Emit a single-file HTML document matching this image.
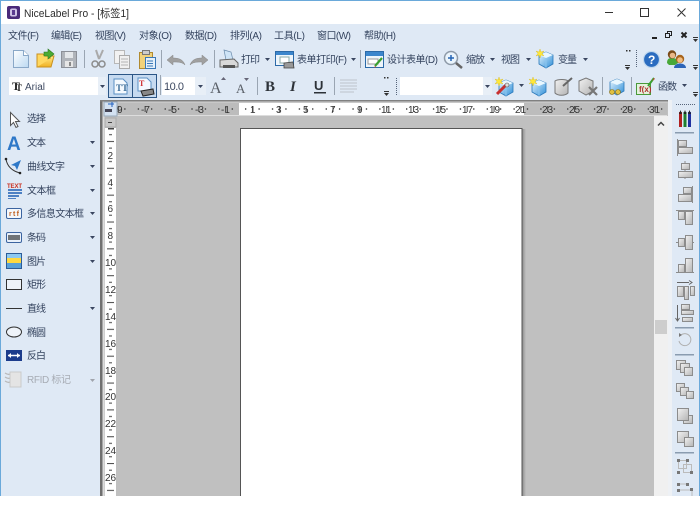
<!DOCTYPE html>
<html><head><meta charset="utf-8"><title>NiceLabel Pro</title>
<style>
html,body{margin:0;padding:0;background:#fff;width:700px;height:515px;overflow:hidden}
svg{display:block;filter:blur(.3px)}
text{font-family:"Liberation Sans","Noto Sans CJK SC",sans-serif;font-size:10px;fill:#34435e}
.m{font-size:10px}
.d{fill:#a7acb4}
.r{font-size:10px;fill:#333}
</style></head><body>
<svg width="700" height="515" viewBox="0 0 700 515" xmlns="http://www.w3.org/2000/svg">
<defs>
<linearGradient id="g" x1="0" y1="0" x2="1" y2="1"><stop offset="0" stop-color="#f2f2f2"/><stop offset="1" stop-color="#b4b4b4"/></linearGradient>
<linearGradient id="c" x1="0" y1="0" x2="1" y2="1"><stop offset="0" stop-color="#e8f6ff"/><stop offset="1" stop-color="#2f8fd8"/></linearGradient>
<linearGradient id="p" x1="0" y1="0" x2="1" y2="1"><stop offset="0" stop-color="#fff"/><stop offset="1" stop-color="#bcd9f2"/></linearGradient>
<linearGradient id="y" x1="0" y1="0" x2="0" y2="1"><stop offset="0" stop-color="#ffe88a"/><stop offset="1" stop-color="#f0b020"/></linearGradient>
<linearGradient id="s" x1="0" y1="0" x2="1" y2="0"><stop offset="0" stop-color="#8a8a8a"/><stop offset="1" stop-color="#c0c0c0"/></linearGradient>
<pattern id="hr" x="239" y="103" width="26.84" height="12" patternUnits="userSpaceOnUse">
<rect x="6.2" y="5" width="1" height="2" fill="#444"/><rect x="13" y="3" width="1" height="6" fill="#444"/><rect x="19.6" y="5" width="1" height="2" fill="#444"/>
</pattern>
<pattern id="vr" x="106" y="128" width="10" height="26.84" patternUnits="userSpaceOnUse">
<rect x="3" y="6.2" width="3" height="1" fill="#444"/><rect x="1" y="13" width="7" height="1" fill="#444"/><rect x="3" y="19.6" width="3" height="1" fill="#444"/>
</pattern>
<pattern id="dots" width="2" height="2" patternUnits="userSpaceOnUse"><rect width="1" height="1" fill="#56647a"/></pattern>
<path id="a" d="M0 0h5l-2.500 3z" fill="#3a4660"/>
<g id="gr"><rect x="0" y="0" width="5" height="1" fill="#333"/><path d="M0 2h5l-2.500 3z" fill="#333"/></g>
<g id="cube"><path d="M2 5l7-3 7 3v9l-7 4-7-4z" fill="url(#c)" stroke="#2a78ba" stroke-width=".8"/><path d="M2 5l7 3 7-3-7-3z" fill="#e9f7ff"/><path d="M9 8v10" stroke="#8cc6ee" fill="none"/></g>
<path id="star" d="M4 0l1 3 3 -1-2 2.500 2 2.500-3-1-1 3-1-3-3 1 2-2.500-2-2.500 3 1z" fill="#ffe83a" stroke="#d6b820" stroke-width=".4"/>
</defs>

<!-- window -->
<rect width="700" height="515" fill="#fff"/>
<rect x="0" y="24" width="700" height="472" fill="#dfe9f5"/>
<rect x="0" y="0" width="700" height="1" fill="#6aa9da"/>
<rect x="0" y="0" width="1" height="496" fill="#6aa9da"/>
<rect x="699" y="0" width="1" height="496" fill="#6aa9da"/>

<!-- title bar -->
<rect x="7" y="6" width="13" height="13" rx="2" fill="#4a2a7a"/>
<rect x="10" y="8.500" width="7" height="8" rx="2" fill="#cfc2e6"/>
<rect x="12" y="10" width="3" height="5" fill="#5b3a90"/>
<text x="24" y="17" style="font-size:11px;fill:#2d2d2d" textLength="105" lengthAdjust="spacingAndGlyphs">NiceLabel Pro - [标签1]</text>
<path d="M605 12.500h8" stroke="#333" fill="none"/>
<rect x="640.500" y="8.500" width="8" height="8" fill="none" stroke="#333"/>
<path d="M677.500 8.500l8 8M685.500 8.500l-8 8" stroke="#333" fill="none"/>

<!-- menu -->
<text class="m" x="8" y="39" textLength="31">文件(F)</text>
<text class="m" x="51" y="39" textLength="31">编辑(E)</text>
<text class="m" x="95" y="39" textLength="31">视图(V)</text>
<text class="m" x="139" y="39" textLength="33">对象(O)</text>
<text class="m" x="185" y="39" textLength="32">数据(D)</text>
<text class="m" x="230" y="39" textLength="32">排列(A)</text>
<text class="m" x="274" y="39" textLength="31">工具(L)</text>
<text class="m" x="317" y="39" textLength="34">窗口(W)</text>
<text class="m" x="364" y="39" textLength="32">帮助(H)</text>
<rect x="652" y="37" width="5" height="2" fill="#222"/>
<path d="M665.500 33.500h4v4h-4zM667.500 33v-1.500h4v4h-2" fill="none" stroke="#222"/>
<path d="M681.500 32.500l5 5M686.500 32.500l-5 5" stroke="#222" stroke-width="2" fill="none"/>
<use href="#gr" x="693" y="37"/>

<!-- toolbar 1 -->
<rect x="5" y="50" width="1" height="17" fill="url(#dots)"/>
<path d="M13.500 50.500h10l5 5v12h-15z" fill="url(#p)" stroke="#8aa8c8"/>
<path d="M23.500 50.500v5h5" fill="#fff" stroke="#8aa8c8"/>
<path d="M37 67l3-11h14l-3 11z" fill="url(#y)" stroke="#c89020"/>
<path d="M37 67v-13h6l2 2h5v3" fill="#ffd860" stroke="#c89020"/>
<path d="M44 52h4v-3l6 5-6 5v-3h-4z" fill="#4cab34" stroke="#2c7a20" stroke-width=".6"/>
<path d="M61.500 51.500h15v16h-15z" fill="#b0b4ba" stroke="#8c9098"/>
<rect x="65" y="52" width="8" height="6" fill="#e4e7ea"/><rect x="65" y="61" width="8" height="6" fill="#e6e6e6"/><rect x="69" y="62" width="2" height="4" fill="#888"/>
<rect x="84" y="50" width="1" height="18" fill="#9aa5b2"/>
<path d="M96 50l3 9M103 50l-4 9" stroke="#aaa" stroke-width="2" fill="none"/>
<circle cx="95" cy="64" r="3" fill="none" stroke="#8c8c8c" stroke-width="1.500"/><circle cx="102" cy="64" r="3" fill="none" stroke="#8c8c8c" stroke-width="1.500"/>
<rect x="114.500" y="50.500" width="10" height="13" fill="#f2f2f2" stroke="#b8b8b8"/>
<rect x="119.500" y="55.500" width="10" height="13" fill="#f0f0f0" stroke="#aaa"/>
<path d="M121 59h7M121 62h7M121 65h7" stroke="#b4b4b4" fill="none"/>
<rect x="139.500" y="52.500" width="13" height="16" fill="#f2d27a" stroke="#b08a30"/>
<rect x="142.500" y="50.500" width="7" height="4" fill="#ccc" stroke="#777"/>
<rect x="145.500" y="57.500" width="10" height="11" fill="#e4f0fa" stroke="#3a78b8"/>
<path d="M147 61h6M147 63.500h6M147 66h6" stroke="#3a78b8" fill="none"/>
<rect x="161" y="50" width="1" height="18" fill="#9aa5b2"/>
<path d="M167 60l6-5v3c5 0 10 1 12 7-3-3-7-3-12-3v3z" fill="#a0a0a0" stroke="#888" stroke-width=".5"/>
<path d="M208 60l-6-5v3c-5 0-10 1-12 7 3-3 7-3 12-3v3z" fill="#a0a0a0" stroke="#888" stroke-width=".5"/>
<rect x="214" y="50" width="1" height="18" fill="#9aa5b2"/>
<path d="M224 50l7 2 2 8h-7z" fill="#cfe4f6" stroke="#6c8cac" stroke-width=".7"/>
<path d="M220 60l14-1 4 4v4h-18z" fill="#d8d8d8" stroke="#666"/>
<rect x="223" y="65" width="12" height="3" fill="#555"/>
<text x="241" y="63" textLength="19">打印</text><use href="#a" x="265" y="58"/>
<rect x="275.500" y="51.500" width="18" height="14" fill="#eef5fb" stroke="#2c6aa8"/><rect x="276" y="52" width="17" height="3" fill="#3c86cc"/>
<rect x="280" y="57" width="9" height="6" fill="#fff" stroke="#8aa"/>
<path d="M284 63l9-1 1 6h-10z" fill="#999" stroke="#444" stroke-width=".8"/>
<text x="297" y="63" textLength="50">表单打印(F)</text><use href="#a" x="351" y="58"/>
<rect x="360" y="50" width="1" height="18" fill="#9aa5b2"/>
<rect x="365.500" y="51.500" width="18" height="16" fill="#eef5fb" stroke="#2c6aa8"/><rect x="366" y="52" width="17" height="4" fill="#3c86cc"/>
<rect x="368" y="59" width="10" height="5" fill="#fff" stroke="#999"/>
<path d="M375 66l7-8" stroke="#3aa030" stroke-width="2.200" fill="none"/><path d="M375 66l-1 2 2-1z" fill="#d04030"/>
<text x="387" y="63" textLength="51">设计表单(D)</text>
<circle cx="451" cy="58" r="6.500" fill="#eaf4fc" stroke="#8e9aa8" stroke-width="1.500"/>
<path d="M448 58h6M451 55v6" stroke="#2464b4" stroke-width="1.500" fill="none"/>
<path d="M456 63l6 5" stroke="#666" stroke-width="2.500" fill="none"/>
<text x="466" y="63" textLength="19">缩放</text><use href="#a" x="490" y="58"/>
<text x="501" y="63" textLength="19">视图</text><use href="#a" x="526" y="58"/>
<use href="#cube" x="537" y="50"/><use href="#star" x="536" y="49"/>
<text x="558" y="63" textLength="19">变量</text><use href="#a" x="583" y="58"/>
<rect x="626" y="50" width="1.500" height="1.500" fill="#333"/><rect x="629" y="50" width="1.500" height="1.500" fill="#333"/>
<use href="#gr" x="625" y="65"/>
<rect x="636" y="50" width="1" height="17" fill="url(#dots)"/>
<circle cx="651.500" cy="59.500" r="8" fill="#2a6cc0" stroke="#c0d8ee" stroke-width="1.200"/>
<text x="648" y="64" style="font-size:12px;font-weight:bold;fill:#fff">?</text>
<path d="M667 63c0-5 3-5 5-5s5 0 6 5l-3 2h-6z" fill="#48a838"/>
<circle cx="672" cy="54.500" r="4.200" fill="#7a4a18"/><circle cx="672.500" cy="55.500" r="2.800" fill="#eab888"/>
<path d="M674 68c0-6 12-6 12 0z" fill="#2c64b8"/>
<circle cx="680" cy="59" r="4.200" fill="#a8641c"/><circle cx="680" cy="60" r="2.800" fill="#f0bc80"/>
<use href="#gr" x="693" y="65"/>

<!-- toolbar 2 -->
<rect x="5" y="78" width="1" height="18" fill="url(#dots)"/>
<rect x="9" y="77" width="89" height="18" fill="#fff"/><rect x="98" y="77" width="8" height="18" fill="#e8eff7"/>
<text x="12" y="90" style="font-family:'Liberation Serif',serif;font-size:12px;font-weight:bold;fill:#222">T</text>
<text x="16" y="91" style="font-family:'Liberation Serif',serif;font-size:9px;font-weight:bold;fill:#222">T</text>
<text x="25" y="90" style="fill:#3c4860" textLength="20">Arial</text>
<use href="#a" x="100" y="85"/>
<rect x="108.500" y="74.500" width="24" height="23" fill="#c6daf0" stroke="#2c5686"/>
<rect x="132.500" y="74.500" width="24" height="23" fill="#c6daf0" stroke="#2c5686"/>
<path d="M114 79h9l4 4v11h-13z" fill="#f4f9fe" stroke="#5a90c4"/>
<text x="116" y="91" style="font-family:'Liberation Serif',serif;font-size:9px;font-weight:bold;fill:#3a6c98">TT</text>
<path d="M138 78h9l4 4v9h-13z" fill="#f4f9fe" stroke="#5a90c4"/>
<text x="139" y="86" style="font-family:'Liberation Serif',serif;font-size:8px;font-weight:bold;fill:#d03030">T</text>
<path d="M141 91l12-2 1 5-11 2z" fill="#888" stroke="#222"/>
<rect x="160" y="75" width="1" height="20" fill="#9aa5b2"/>
<rect x="162" y="77" width="33" height="18" fill="#fff"/><rect x="195" y="77" width="11" height="18" fill="#e8eff7"/>
<text x="164" y="90" style="font-size:11px;fill:#3c4860" textLength="20">10.0</text>
<use href="#a" x="198" y="85"/>
<text x="210" y="93" style="font-family:'Liberation Serif',serif;font-size:16px;fill:#5a6068">A</text>
<path d="M221 80l2.500-3 2.500 3z" fill="#667"/>
<text x="236" y="93" style="font-family:'Liberation Serif',serif;font-size:13px;fill:#5a6068">A</text>
<path d="M244 78h5l-2.500 3z" fill="#667"/>
<rect x="257" y="77" width="1" height="18" fill="#9aa5b2"/>
<text x="265" y="91" style="font-family:'Liberation Serif',serif;font-size:15px;font-weight:bold;fill:#2d3238">B</text>
<text x="290" y="91" style="font-family:'Liberation Serif',serif;font-size:15px;font-weight:bold;font-style:italic;fill:#2d3238">I</text>
<text x="314" y="90" style="font-family:'Liberation Sans',sans-serif;font-size:13px;font-weight:bold;fill:#2d3238">U</text>
<rect x="314" y="92" width="12" height="1.500" fill="#2d3238"/>
<rect x="334" y="77" width="1" height="18" fill="#9aa5b2"/>
<path d="M340 80h17M340 83h17M340 86h17M340 89h17M340 92h14" stroke="#bcc2ca" fill="none"/>
<rect x="384" y="77" width="1.500" height="1.500" fill="#333"/><rect x="387" y="77" width="1.500" height="1.500" fill="#333"/>
<use href="#gr" x="384" y="91"/>
<rect x="396" y="77" width="1" height="18" fill="url(#dots)"/>
<rect x="400" y="77" width="83" height="18" fill="#fff"/><rect x="483" y="77" width="9" height="18" fill="#e8eff7"/>
<use href="#a" x="485" y="85"/>
<use href="#cube" x="497" y="78"/><use href="#star" x="495" y="77"/>
<path d="M497 94l9-9" stroke="#c83030" stroke-width="3" fill="none"/><circle cx="507" cy="85" r="2" fill="#ddd" stroke="#555" stroke-width=".6"/>
<use href="#a" x="519" y="84"/>
<use href="#cube" x="530" y="78"/><use href="#star" x="529" y="77"/>
<path d="M555 81c3-2 11-2 13 0v12c-3 3-10 3-13 0z" fill="url(#g)" stroke="#777"/>
<path d="M563 86l9-8" stroke="#666" stroke-width="2" fill="none"/>
<path d="M579 81l7-3 7 3v10l-7 4-7-4z" fill="url(#g)" stroke="#777"/>
<path d="M589 87l8 8M597 87l-8 8" stroke="#777" stroke-width="2.200" fill="none"/>
<rect x="602" y="77" width="1" height="18" fill="#9aa5b2"/>
<use href="#cube" x="608" y="77"/>
<circle cx="612" cy="92" r="2.500" fill="#e0c040" stroke="#806a10" stroke-width=".6"/><circle cx="618" cy="92" r="2.500" fill="#e0c040" stroke="#806a10" stroke-width=".6"/>
<rect x="631" y="77" width="1" height="18" fill="#9aa5b2"/>
<rect x="636.500" y="83.500" width="14" height="11" fill="#e4f2dc" stroke="#4a9a3a"/>
<text x="639" y="92" style="font-size:8px;font-weight:bold;fill:#b03030">f(x)</text>
<path d="M648 86l6-8" stroke="#3aa030" stroke-width="2" fill="none"/><path d="M652 81l2-3 1 1z" fill="#d04030"/>
<text x="658" y="90" textLength="19">函数</text><use href="#a" x="682" y="84"/>
<use href="#gr" x="693" y="92"/>

<!-- left toolbar -->
<rect x="5" y="103" width="89" height="1" fill="url(#dots)"/>
<path d="M10.500 112.500v13l3-3 2.500 5 2-1-2.500-5h4z" fill="#fff" stroke="#555"/>
<text x="27" y="122" textLength="19">选择</text>
<text x="7" y="150" style="font-size:19px;font-weight:bold;fill:#2e78c8">A</text>
<text x="27" y="146" textLength="19">文本</text><use href="#a" x="90" y="141"/>
<path d="M6 159c1 7 6 12 14 14" fill="none" stroke="#333"/><circle cx="6" cy="159" r="1.300" fill="#222"/><circle cx="20" cy="173" r="1.300" fill="#222"/>
<path d="M11 165l10-5-4 10-2-4z" fill="#2e78c8"/>
<text x="27" y="170" textLength="38">曲线文字</text><use href="#a" x="90" y="165"/>
<text x="7" y="188" style="font-size:6px;font-weight:bold;fill:#c83020" textLength="15">TEXT</text>
<path d="M8 189h14v2h-14zM8 192h14v2h-14zM8 195h11v2h-11zM8 198h8v1h-8z" fill="#4c80c4"/>
<text x="27" y="194" textLength="29">文本框</text><use href="#a" x="90" y="189"/>
<rect x="6.500" y="208.500" width="15" height="10" rx="1.500" fill="#f4f8fc" stroke="#3c64a0"/>
<text x="9" y="216" style="font-size:7px;font-weight:bold;fill:#c06020" textLength="10">rtf</text>
<text x="27" y="217" textLength="57">多信息文本框</text><use href="#a" x="90" y="212"/>
<rect x="6.500" y="232.500" width="15" height="10" rx="1.500" fill="#e8f0fa" stroke="#3c64a0"/>
<path d="M9 235v5M11 235v5M13 235v5M15 235v5M17 235v5M19 235v5" stroke="#222" stroke-width="1.200"/>
<text x="27" y="241" textLength="19">条码</text><use href="#a" x="90" y="236"/>
<rect x="6.500" y="253.500" width="15" height="15" fill="#8cc8f0" stroke="#2c5c98"/>
<rect x="7" y="258" width="14" height="5" fill="#ffd840"/><rect x="7" y="263" width="14" height="5" fill="#58a0d8"/>
<text x="27" y="265" textLength="19">图片</text><use href="#a" x="90" y="260"/>
<rect x="6.500" y="279.500" width="15" height="10" fill="#eef3f9" stroke="#333"/>
<text x="27" y="288" textLength="19">矩形</text>
<rect x="6" y="308" width="16" height="1" fill="#333"/>
<text x="27" y="312" textLength="19">直线</text><use href="#a" x="90" y="307"/>
<ellipse cx="14" cy="332" rx="7.500" ry="5" fill="#eef3f9" stroke="#333"/>
<text x="27" y="336" textLength="19">椭圆</text>
<rect x="6" y="350" width="16" height="11" fill="#1c3c8c"/>
<path d="M8 355.500h12" stroke="#fff" stroke-width="1.500"/><path d="M8 355.500l3-2.500v5zM20 355.500l-3-2.500v5z" fill="#fff"/>
<text x="27" y="359" textLength="19">反白</text>
<path d="M5 373c3 2 5 2 7 0M5 377c3 2 5 2 7 0M5 381c3 2 5 2 7 0" stroke="#b8b8b8" fill="none" stroke-width="1.300"/>
<rect x="10" y="372" width="11" height="15" fill="#e4e4e4" stroke="#cacaca"/>
<text class="d" x="27" y="383" textLength="44">RFID 标记</text><path d="M90 379h5l-2.500 3z" fill="#a0a4ac"/>

<!-- work area -->
<rect x="100" y="100" width="568" height="396" fill="#c0c0c0"/>
<rect x="100" y="100" width="2.500" height="396" fill="#707070"/>
<rect x="102.500" y="100" width="2" height="396" fill="#dcdcdc"/>
<rect x="100" y="100" width="568" height="1.500" fill="#808080"/>
<rect x="102.500" y="101.500" width="565" height="1" fill="#d4d4d4"/>
<rect x="116" y="102.500" width="551" height="12.500" fill="#bcbcbc"/>
<rect x="116" y="115" width="551" height="1" fill="#ddd"/>
<rect x="116" y="103" width="551" height="12" fill="url(#hr)"/>
<rect x="239" y="103" width="285" height="12" fill="#fff"/>
<rect x="239" y="103" width="285" height="12" fill="url(#hr)"/>
<rect x="104" y="102" width="13" height="14" fill="#d4e2f2" stroke="#9ab"/>
<path d="M105 109h7v3h-7z" fill="#445"/><path d="M108 104h6M112 102v5" stroke="#2060c0" fill="none"/>
<g class="r">
<text class="r" x="117" y="113">9</text><text class="r" x="141" y="113">-7</text><text class="r" x="168" y="113">-5</text><text class="r" x="195" y="113">-3</text><text class="r" x="221" y="113">-1</text>
<text class="r" x="250" y="113">1</text><text class="r" x="276" y="113">3</text><text class="r" x="303" y="113">5</text><text class="r" x="330" y="113">7</text><text class="r" x="357" y="113">9</text>
<text class="r" x="381" y="113">11</text><text class="r" x="408" y="113">13</text><text class="r" x="435" y="113">15</text><text class="r" x="462" y="113">17</text><text class="r" x="489" y="113">19</text><text class="r" x="515" y="113">21</text>
<text class="r" x="542" y="113">23</text><text class="r" x="569" y="113">25</text><text class="r" x="596" y="113">27</text><text class="r" x="622" y="113">29</text><text class="r" x="649" y="113">31</text>
</g>
<rect x="105" y="118" width="11" height="9" fill="#c8c8c8" stroke="#aaa"/><rect x="108" y="122" width="4" height="1" fill="#444"/>
<rect x="105" y="128" width="11" height="368" fill="#fff"/>
<rect x="106" y="128" width="10" height="368" fill="url(#vr)"/>
<rect x="108" y="128" width="6" height="1.500" fill="#444"/>
<text class="r" x="107.500" y="159">2</text><text class="r" x="107.500" y="186">4</text><text class="r" x="107.500" y="212">6</text><text class="r" x="107.500" y="239">8</text>
<text class="r" x="105" y="266">10</text><text class="r" x="105" y="293">12</text><text class="r" x="105" y="320">14</text><text class="r" x="105" y="347">16</text><text class="r" x="105" y="374">18</text><text class="r" x="105" y="400">20</text><text class="r" x="105" y="427">22</text><text class="r" x="105" y="454">24</text><text class="r" x="105" y="481">26</text>
<!-- paper -->
<rect x="522" y="129" width="4" height="367" fill="url(#s)"/>
<rect x="240.500" y="128.500" width="281.500" height="368" fill="#fff" stroke="#555"/>
<!-- scrollbar -->
<rect x="654" y="116" width="14" height="380" fill="#f0f0f0"/>
<path d="M658 125.500l3-3 3 3" stroke="#444" stroke-width="1.500" fill="none"/>
<rect x="655" y="320" width="12" height="14" fill="#cdcdcd"/>
<rect x="668" y="100" width="4" height="396" fill="#eef1f5"/>
<rect x="672" y="100" width="27" height="396" fill="#dfe9f5"/>
<!-- right toolbar -->
<rect x="676" y="104" width="19" height="1" fill="url(#dots)"/>
<path d="M680.500 112v15" stroke="#b02020" stroke-width="3"/><path d="M685 112v15" stroke="#208030" stroke-width="3"/><path d="M689.500 112v15" stroke="#2030a0" stroke-width="3"/>
<path d="M679 114l1.500-4 1.500 4zM683.500 114l1.500-4 1.500 4zM688 114l1.500-4 1.500 4z" fill="#222"/>
<rect x="675" y="132" width="19" height="1.500" fill="#8a9cb0"/>
<g fill="url(#g)" stroke="#8c8c8c">
<path d="M677.500 139v17" fill="none"/><rect x="678.500" y="140.500" width="8" height="6"/><rect x="678.500" y="147.500" width="14" height="6"/>
<path d="M685 161v18" fill="none"/><rect x="681.500" y="163.500" width="8" height="6"/><rect x="678.500" y="171.500" width="14" height="6"/>
<path d="M692.500 186v17" fill="none"/><rect x="683.500" y="187.500" width="8" height="6"/><rect x="678.500" y="194.500" width="13" height="7"/>
<path d="M676 210.500h18" fill="none"/><rect x="678.500" y="211.500" width="6" height="8"/><rect x="685.500" y="211.500" width="7" height="13"/>
<path d="M676 242.500h18" fill="none"/><rect x="678.500" y="238.500" width="6" height="8"/><rect x="685.500" y="235.500" width="7" height="14"/>
<path d="M676 272.500h18" fill="none"/><rect x="678.500" y="264.500" width="6" height="8"/><rect x="685.500" y="258.500" width="7" height="14"/>
<rect x="677.500" y="286.500" width="6" height="10"/><rect x="684.500" y="286.500" width="4" height="13"/><rect x="690.500" y="286.500" width="4" height="9"/>
<path d="M677 282.500h12M689 280.500l3 2-3 2" fill="none" stroke="#666"/>
<path d="M677.500 305v15M675.500 318l2 3 2-3" fill="none" stroke="#666"/><rect x="681.500" y="304.500" width="8" height="5"/><rect x="681.500" y="310.500" width="12" height="4"/><rect x="682.500" y="317.500" width="10" height="4"/>
</g>
<rect x="675" y="327" width="19" height="1.500" fill="#8a9cb0"/>
<path d="M681 335a6 6 0 1 1-2 6" fill="none" stroke="#b0b0b0"/><path d="M679 333l3 2-3 2z" fill="#777"/>
<rect x="675" y="354" width="19" height="1.500" fill="#8a9cb0"/>
<g fill="url(#g)" stroke="#8c8c8c">
<rect x="676.500" y="360.500" width="9" height="9"/><rect x="680.500" y="363.500" width="9" height="9"/><rect x="684.500" y="367.500" width="8" height="8"/>
<rect x="676.500" y="383.500" width="8" height="8"/><rect x="680.500" y="387.500" width="8" height="8"/><rect x="686.500" y="391.500" width="7" height="7"/>
<rect x="683.500" y="415.500" width="9" height="8"/><rect x="677.500" y="408.500" width="11" height="12"/>
<rect x="677.500" y="431.500" width="11" height="11"/><rect x="684.500" y="437.500" width="9" height="9"/>
</g>
<rect x="675" y="452" width="19" height="1.500" fill="#8a9cb0"/>
<path d="M678.500 460.500h8v8h-8z" fill="none" stroke="#bbb"/><rect x="683.500" y="464.500" width="8" height="8" fill="none" stroke="#bbb"/>
<path d="M677 459h3v3h-3zM686 459h3v3h-3zM677 471h3v3h-3zM690 471h3v3h-3z" fill="#777"/>
<path d="M678 484h9M680 490h12v6" fill="none" stroke="#bbb"/>
<path d="M677 483h3v3h-3zM686 483h3v3h-3zM690 488h3v3h-3zM677 489h3v3h-3z" fill="#777"/>
<rect x="0" y="496" width="700" height="19" fill="#fff"/>
</svg>
</body></html>
